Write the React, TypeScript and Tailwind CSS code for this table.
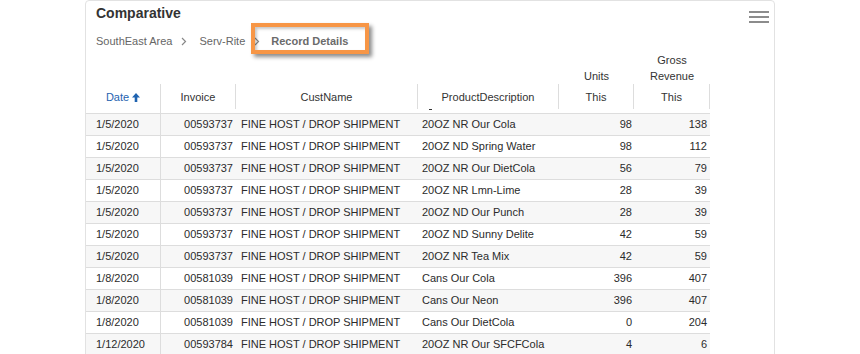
const rows = [
  ['1/5/2020', '00593737', 'FINE HOST / DROP SHIPMENT', '20OZ NR Our Cola', '98', '138'],
  ['1/5/2020', '00593737', 'FINE HOST / DROP SHIPMENT', '20OZ ND Spring Water', '98', '112'],
  ['1/5/2020', '00593737', 'FINE HOST / DROP SHIPMENT', '20OZ NR Our DietCola', '56', '79'],
  ['1/5/2020', '00593737', 'FINE HOST / DROP SHIPMENT', '20OZ NR Lmn-Lime', '28', '39'],
  ['1/5/2020', '00593737', 'FINE HOST / DROP SHIPMENT', '20OZ ND Our Punch', '28', '39'],
  ['1/5/2020', '00593737', 'FINE HOST / DROP SHIPMENT', '20OZ ND Sunny Delite', '42', '59'],
  ['1/5/2020', '00593737', 'FINE HOST / DROP SHIPMENT', '20OZ NR Tea Mix', '42', '59'],
  ['1/8/2020', '00581039', 'FINE HOST / DROP SHIPMENT', 'Cans Our Cola', '396', '407'],
  ['1/8/2020', '00581039', 'FINE HOST / DROP SHIPMENT', 'Cans Our Neon', '396', '407'],
  ['1/8/2020', '00581039', 'FINE HOST / DROP SHIPMENT', 'Cans Our DietCola', '0', '204'],
  ['1/12/2020', '00593784', 'FINE HOST / DROP SHIPMENT', '20OZ NR Our SFCFCola', '4', '6'],
];

function Chevron() {
  return (
    <svg width="6" height="9" viewBox="0 0 6 9" className="shrink-0">
      <path d="M1 1l3.5 3.5L1 8" fill="none" stroke="#888" strokeWidth="1.2" />
    </svg>
  );
}

function HeaderCell({ width, group, label, first }: { width: string; group?: React.ReactNode; label: React.ReactNode; first?: boolean }) {
  return (
    <div className={`${width} flex flex-col`}>
      <div className="h-[32px] flex items-end justify-center text-center leading-[16px]">{group}</div>
      <div className="h-[29px] flex">
        <div className="flex-1 flex items-start justify-center pt-[6px] leading-[14px]">{label}</div>
        <div className={first ? 'w-px h-[29px] bg-[#ddd]' : 'w-px h-[25px] bg-[#ddd]'} />
      </div>
    </div>
  );
}

export default function App() {
  return (
    <div className="h-[354px] overflow-hidden bg-white pl-[85px] text-[#333]" style={{ fontFamily: '"Liberation Sans", Arial, sans-serif' }}>
      <div className="relative w-[690px] h-[400px] border border-[#e2e2e2] rounded-[4px]">
        {/* Title */}
        <div className="flex items-start justify-between pt-[4px] pl-[10px] pr-[5px]">
          <div className="text-[14px] font-bold leading-[16px] text-[#333]">Comparative</div>
          <div className="mt-[6px] w-[20px] flex flex-col gap-[3px]">
            <div className="h-[2px] bg-[#8c8c8c]" />
            <div className="h-[2px] bg-[#8c8c8c]" />
            <div className="h-[2px] bg-[#8c8c8c]" />
          </div>
        </div>

        {/* Breadcrumb */}
        <div className="mt-[10px] pl-[10px] flex items-center h-[16px] text-[11px] text-[#666]">
          <span>SouthEast Area</span>
          <span className="ml-[9px] mr-[12px]"><Chevron /></span>
          <span>Serv-Rite</span>
          <span className="ml-[9px] mr-[11px]"><Chevron /></span>
          <span className="font-bold text-[#6b6b6b]">Record Details</span>
        </div>

        {/* highlight annotation */}
        <div className="absolute left-[165px] top-[22px] w-[118px] h-[31px] border-[4px] border-[#f79646] shadow-[inset_2px_2px_3px_rgba(0,0,0,0.22),3px_3px_4px_rgba(0,0,0,0.45)]" />

        {/* Table header */}
        <div className="relative mt-[3px] flex w-[624px] border-b border-[#ddd] text-[11px] text-[#333]">
          <HeaderCell
            width="w-[75px]"
            first
            label={
              <span className="flex items-center gap-[3px] text-[#1f63b0]">
                Date
                <svg width="8" height="9" viewBox="0 0 8 9">
                  <path d="M4 0L8 4.5H5.3V9H2.7V4.5H0Z" fill="#1f63b0" />
                </svg>
              </span>
            }
          />
          <HeaderCell width="w-[75px]" label="Invoice" />
          <HeaderCell width="w-[182px]" label="CustName" />
          <HeaderCell width="w-[141px]" label="ProductDescription" />
          <HeaderCell width="w-[75px]" group="Units" label="This" />
          <HeaderCell width="w-[76px]" group={<span>Gross<br />Revenue</span>} label="This" />
          <div className="absolute left-[343px] top-[57px] w-[3px] h-[1px] bg-[#333]" />
        </div>

        {/* Rows */}
        <div className="w-[624px] text-[11px] text-[#2b2b2b]">
          {rows.map((r, i) => (
            <div key={i} className={`flex h-[22px] items-center border-b border-[#ddd] ${i % 2 === 0 ? 'bg-[#f7f7f7]' : 'bg-white'}`}>
              <div className="w-[75px] h-full flex items-center pl-[10px] border-r border-[#ddd]">{r[0]}</div>
              <div className="w-[75px] text-right pr-[3px]">{r[1]}</div>
              <div className="w-[182px] pl-[5px]">{r[2]}</div>
              <div className="w-[141px] pl-[4px]">{r[3]}</div>
              <div className="w-[75px] text-right pr-[2px]">{r[4]}</div>
              <div className="w-[76px] text-right pr-[3px]">{r[5]}</div>
            </div>
          ))}
        </div>
      </div>
    </div>
  );
}
